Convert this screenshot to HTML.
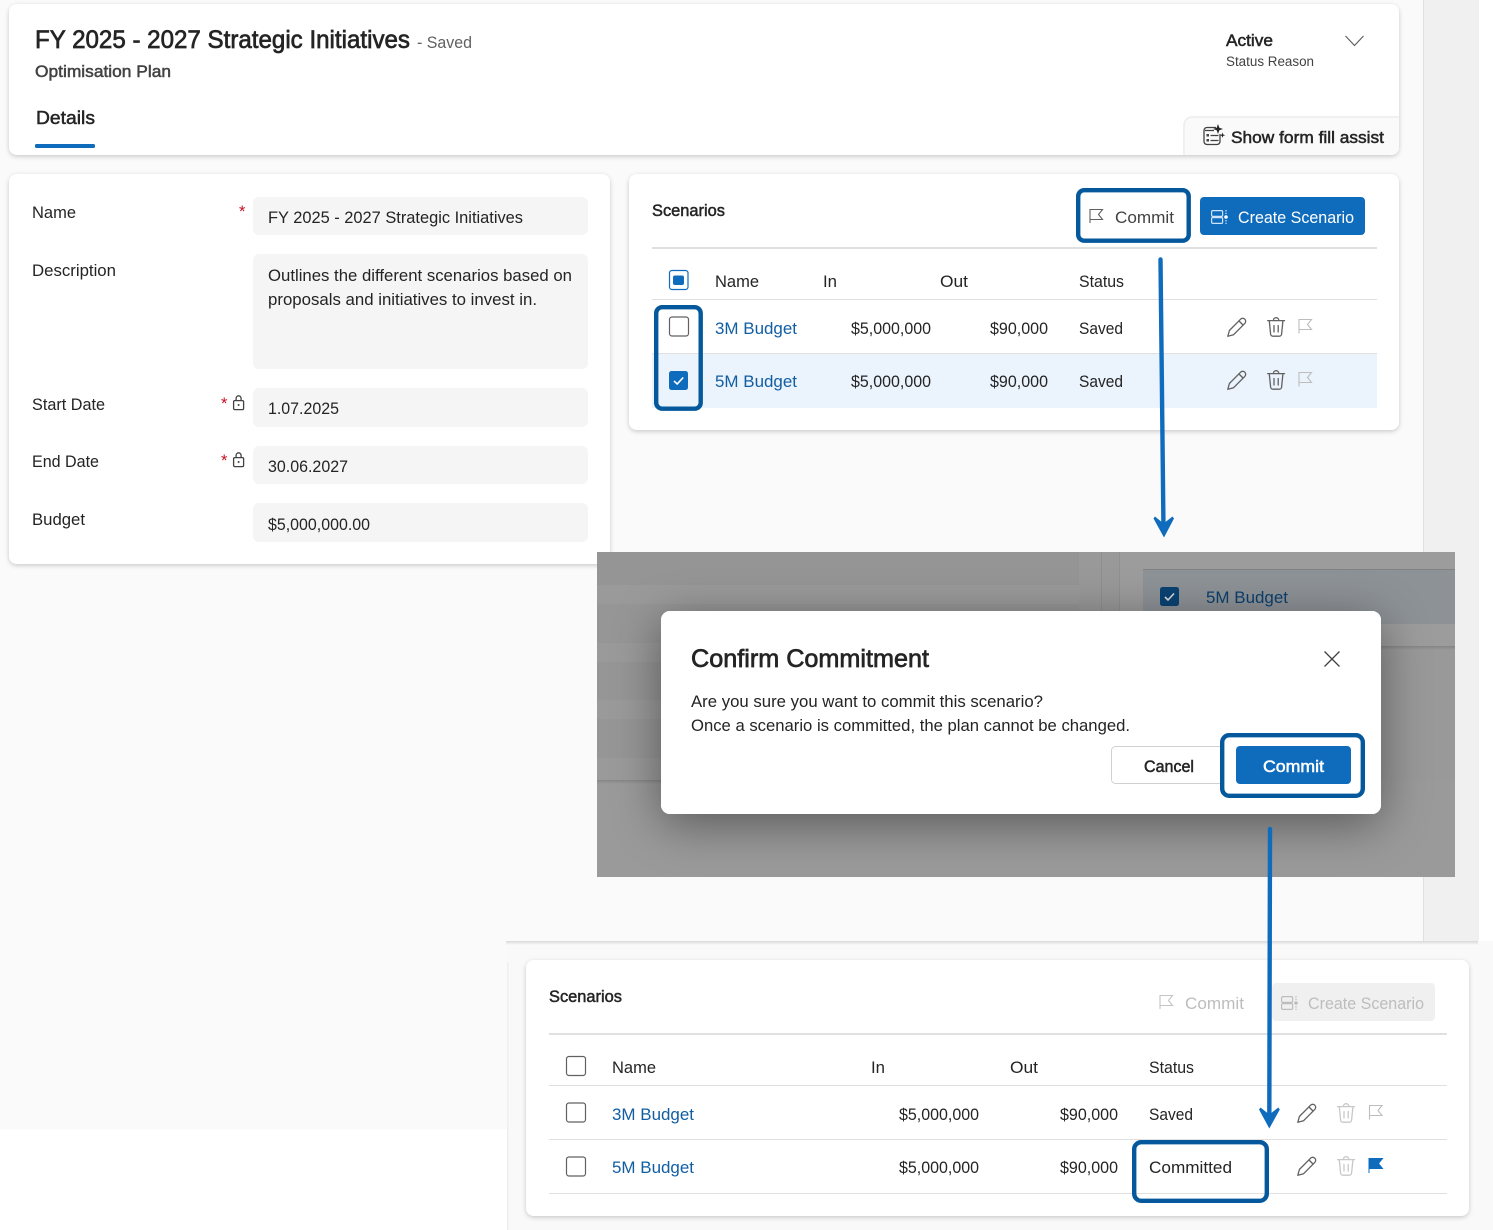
<!DOCTYPE html>
<html lang="en">
<head>
<meta charset="utf-8">
<title>Confirm Commitment</title>
<style>
html,body{margin:0;padding:0;background:#fff;width:1493px;height:1230px;overflow:hidden}
svg{display:block;position:absolute;left:0;top:0}
text{font-family:"Liberation Sans",sans-serif;font-size:16.5px;fill:#242424;white-space:pre}
.sb{stroke:#242424;stroke-width:.5px}
.lnk{fill:#115ea3}
.dis{fill:#bdbdbd}
</style>
</head>
<body>
<svg width="1493" height="1230" viewBox="0 0 1493 1230" xmlns="http://www.w3.org/2000/svg">
<defs>
<filter id="sh" x="-5%" y="-10%" width="110%" height="125%"><feDropShadow dx="0" dy="1.5" stdDeviation="2.5" flood-color="#000" flood-opacity=".2"/></filter>
<filter id="msh" x="-25%" y="-60%" width="150%" height="240%"><feDropShadow dx="0" dy="10" stdDeviation="24" flood-color="#000" flood-opacity=".42"/></filter>
<linearGradient id="edge" x1="0" y1="0" x2="0" y2="1"><stop offset="0" stop-color="#000" stop-opacity=".13"/><stop offset="1" stop-color="#000" stop-opacity="0"/></linearGradient>
<clipPath id="ov"><rect x="597" y="552" width="858" height="325"/></clipPath>
<g id="pencil" fill="none" stroke="#616161" stroke-width="1.3" stroke-linejoin="round"><path d="M.8 19.3l1.6-5.8L13.6 2.2a2.5 2.5 0 0 1 4.2 4.2L6.6 17.7z"/><path d="M12 4l4 4"/></g>
<g id="trash" fill="none" stroke="#616161" stroke-width="1.3" stroke-linecap="round" stroke-linejoin="round"><path d="M.7 3.6h16.8"/><path d="M6.4 3.4a2.7 2.7 0 0 1 5.4 0"/><path d="M2.3 4l1.3 13a2.3 2.3 0 0 0 2.3 2.2h6.4a2.3 2.3 0 0 0 2.3-2.2L15.9 4"/><path d="M7 8.500v6.500M11.200 8.500v6.500"/></g>
<g id="trashd" fill="none" stroke="#c8c8c8" stroke-width="1.3" stroke-linecap="round" stroke-linejoin="round"><path d="M.7 3.6h16.8"/><path d="M6.4 3.4a2.7 2.7 0 0 1 5.4 0"/><path d="M2.3 4l1.3 13a2.3 2.3 0 0 0 2.3 2.2h6.4a2.3 2.3 0 0 0 2.3-2.2L15.900 4"/><path d="M7 8.500v6.500M11.200 8.500v6.500"/></g>
<path id="flag" d="M.5 14.500V.5H13L9 5.500l4 5H.5" fill="none" stroke="#bdbdbd" stroke-width="1.100"/>
<g id="lock" fill="none" stroke="#424242" stroke-width="1.300"><rect x="1.100" y="5.600" width="10" height="9" rx="1.200"/><path d="M3.600 5.500V3.300a2.500 2.500 0 0 1 5 0v2.200"/><circle cx="6.100" cy="10" r="1" fill="#424242" stroke="none"/></g>
<g id="create" fill="none" stroke-width="1.200"><rect x=".6" y=".6" width="11" height="5.800" rx="1.100"/><rect x=".6" y="7.600" width="11" height="5.800" rx="1.100"/><path d="M15 0v4M15 10v4" stroke-dasharray="1.500 1.200"/></g>
<rect id="cb" width="19" height="19" rx="2.500" fill="#fff" stroke="#616161" stroke-width="1.200"/>
</defs>

<!-- page background -->
<rect width="1493" height="1230" fill="#fff"/>
<rect x="0" y="0" width="1424" height="941" fill="#fafafa"/>
<rect x="1423" y="0" width="1" height="941" fill="#e0e0e0"/>
<rect x="1424" y="0" width="55" height="941" fill="#f0f0f0"/>
<rect x="0" y="941" width="507" height="188" fill="#fafafa"/>
<rect x="507" y="941" width="986" height="289" fill="#f9f9f9"/>
<rect x="506" y="941" width="972" height="4" fill="url(#edge)"/>
<rect x="507" y="962" width="1.500" height="268" fill="#efefef"/>

<!-- header card -->
<rect x="9" y="4" width="1390" height="151" rx="8" fill="#fff" filter="url(#sh)"/>
<text x="35" y="48" style="font-size:25px;stroke-width:.7px" class="sb" textLength="375" lengthAdjust="spacingAndGlyphs">FY 2025 - 2027 Strategic Initiatives</text>
<text x="417" y="48" style="fill:#616161" textLength="55" lengthAdjust="spacingAndGlyphs">- Saved</text>
<text x="35" y="77" class="sb" style="fill:#424242;stroke:#424242" textLength="136" lengthAdjust="spacingAndGlyphs">Optimisation Plan</text>
<text x="36" y="124" class="sb" style="font-size:18.500px" textLength="59" lengthAdjust="spacingAndGlyphs">Details</text>
<rect x="35" y="144" width="60" height="4" rx="1.500" fill="#0f6cbd"/>
<text x="1226" y="46" class="sb" textLength="47" lengthAdjust="spacingAndGlyphs">Active</text>
<text x="1226" y="66" style="font-size:13.500px;fill:#424242" textLength="88" lengthAdjust="spacingAndGlyphs">Status Reason</text>
<path d="M1345.500 36l9 9.500 9-9.500" fill="none" stroke="#616161" stroke-width="1.200"/>
<path d="M1184 155v-30a8 8 0 0 1 8-8h207v30a8 8 0 0 1-8 8z" fill="#fafafa"/>
<path d="M1184 155v-30a8 8 0 0 1 8-8h207" fill="none" stroke="#ececec" stroke-width="1.500"/>
<g fill="none" stroke="#424242" stroke-width="1.300"><path d="M1216 127.500h-9a3 3 0 0 0-3 3v11a3 3 0 0 0 3 3h10a3 3 0 0 0 3-3V134"/><path d="M1205 130.500h9M1210.500 135.500h8M1210.500 140.500h8"/></g>
<rect x="1206.500" y="134" width="2.500" height="2.500" fill="#424242"/><rect x="1206.500" y="139" width="2.500" height="2.500" fill="#424242"/>
<path d="M1218 124l1.300 3.700 3.700 1.300-3.700 1.300-1.300 3.700-1.300-3.700-3.700-1.300 3.700-1.300z" fill="#242424"/>
<path d="M1222.500 132.500l.7 2 2 .7-2 .7-.7 2-.7-2-2-.7 2-.7z" fill="#242424"/>
<text x="1231" y="143" class="sb" textLength="153" lengthAdjust="spacingAndGlyphs">Show form fill assist</text>

<!-- left form card -->
<rect x="9" y="174" width="601" height="390" rx="8" fill="#fff" filter="url(#sh)"/>
<text x="32" y="218" textLength="44" lengthAdjust="spacingAndGlyphs">Name</text>
<text x="32" y="276" textLength="84" lengthAdjust="spacingAndGlyphs">Description</text>
<text x="32" y="410" textLength="73" lengthAdjust="spacingAndGlyphs">Start Date</text>
<text x="32" y="467" textLength="67" lengthAdjust="spacingAndGlyphs">End Date</text>
<text x="32" y="525" textLength="53" lengthAdjust="spacingAndGlyphs">Budget</text>
<text x="239" y="217" style="fill:#c50f1f">*</text>
<text x="221" y="409" style="fill:#c50f1f">*</text>
<text x="221" y="466" style="fill:#c50f1f">*</text>
<use href="#lock" x="232.500" y="395"/>
<use href="#lock" x="232.500" y="452"/>
<rect x="253" y="197" width="335" height="38" rx="6" fill="#f5f5f5"/>
<rect x="253" y="254" width="335" height="115" rx="6" fill="#f5f5f5"/>
<rect x="253" y="388" width="335" height="39" rx="6" fill="#f5f5f5"/>
<rect x="253" y="446" width="335" height="38" rx="6" fill="#f5f5f5"/>
<rect x="253" y="503" width="335" height="39" rx="6" fill="#f5f5f5"/>
<text x="268" y="223" textLength="255" lengthAdjust="spacingAndGlyphs">FY 2025 - 2027 Strategic Initiatives</text>
<text x="268" y="281" textLength="304" lengthAdjust="spacingAndGlyphs">Outlines the different scenarios based on</text>
<text x="268" y="305" textLength="269" lengthAdjust="spacingAndGlyphs">proposals and initiatives to invest in.</text>
<text x="268" y="414" textLength="71" lengthAdjust="spacingAndGlyphs">1.07.2025</text>
<text x="268" y="472" textLength="80" lengthAdjust="spacingAndGlyphs">30.06.2027</text>
<text x="268" y="530" textLength="102" lengthAdjust="spacingAndGlyphs">$5,000,000.00</text>

<!-- top scenarios card -->
<rect x="629" y="174" width="770" height="256" rx="8" fill="#fff" filter="url(#sh)"/>
<text x="652" y="216" class="sb" textLength="73" lengthAdjust="spacingAndGlyphs">Scenarios</text>
<path d="M1090 223V209.500h12.500l-4 5 4 5H1090" fill="none" stroke="#616161" stroke-width="1.100"/>
<text x="1115" y="223" style="fill:#424242" textLength="59" lengthAdjust="spacingAndGlyphs">Commit</text>
<rect x="1200" y="197" width="165" height="38" rx="4" fill="#0f6cbd"/>
<use href="#create" x="1211" y="210" stroke="#cfe4fa"/>
<circle cx="1226" cy="217" r="1.800" fill="#fff"/>
<text x="1238" y="223" style="fill:#fff" textLength="116" lengthAdjust="spacingAndGlyphs">Create Scenario</text>
<rect x="652" y="247" width="725" height="2" fill="#e0e0e0"/>
<rect x="669.500" y="270.500" width="18.500" height="19" rx="2.500" fill="#fff" stroke="#0f6cbd" stroke-width="1.200"/>
<rect x="673" y="275.500" width="11" height="9.500" rx="2" fill="#0f6cbd"/>
<text x="715" y="287" textLength="44" lengthAdjust="spacingAndGlyphs">Name</text>
<text x="823" y="287" textLength="14" lengthAdjust="spacingAndGlyphs">In</text>
<text x="940" y="287" textLength="28" lengthAdjust="spacingAndGlyphs">Out</text>
<text x="1079" y="287" textLength="45" lengthAdjust="spacingAndGlyphs">Status</text>
<rect x="652" y="299" width="725" height="1" fill="#e0e0e0"/>
<rect x="652" y="353" width="725" height="1" fill="#e0e0e0"/>
<rect x="652" y="354" width="725" height="54" fill="#ebf3fc"/>
<use href="#cb" x="669.500" y="317"/>
<rect x="669" y="371" width="19" height="19" rx="2.500" fill="#0f6cbd"/>
<path d="M674 381l3.200 3 6-6.500" fill="none" stroke="#fff" stroke-width="1.600"/>
<text x="715" y="334" class="lnk" textLength="82" lengthAdjust="spacingAndGlyphs">3M Budget</text>
<text x="851" y="334" textLength="80" lengthAdjust="spacingAndGlyphs">$5,000,000</text>
<text x="990" y="334" textLength="58" lengthAdjust="spacingAndGlyphs">$90,000</text>
<text x="1079" y="334" textLength="44" lengthAdjust="spacingAndGlyphs">Saved</text>
<text x="715" y="387" class="lnk" textLength="82" lengthAdjust="spacingAndGlyphs">5M Budget</text>
<text x="851" y="387" textLength="80" lengthAdjust="spacingAndGlyphs">$5,000,000</text>
<text x="990" y="387" textLength="58" lengthAdjust="spacingAndGlyphs">$90,000</text>
<text x="1079" y="387" textLength="44" lengthAdjust="spacingAndGlyphs">Saved</text>
<use href="#pencil" x="1227" y="317"/><use href="#trash" x="1267" y="317"/><use href="#flag" x="1298.500" y="319"/>
<use href="#pencil" x="1227" y="370"/><use href="#trash" x="1267" y="370"/><use href="#flag" x="1298.500" y="372"/>

<!-- callouts on top card -->
<rect x="1078.200" y="190.200" width="110.500" height="50.500" rx="6" fill="none" stroke="#05589c" stroke-width="4.400"/>
<rect x="656.200" y="307.200" width="44.500" height="101.500" rx="6" fill="none" stroke="#05589c" stroke-width="4.400"/>

<!-- dimmed modal screenshot -->
<g clip-path="url(#ov)">
<rect x="597" y="552" width="858" height="325" fill="#999"/>
<rect x="597" y="552" width="482" height="33" fill="#959595"/>
<rect x="597" y="585" width="482" height="19" fill="#9a9a9a"/>
<rect x="597" y="604" width="482" height="39" fill="#969696"/>
<rect x="597" y="643" width="482" height="19" fill="#9a9a9a"/>
<rect x="597" y="662" width="482" height="38" fill="#969696"/>
<rect x="597" y="700" width="482" height="19" fill="#9a9a9a"/>
<rect x="597" y="719" width="482" height="39" fill="#969696"/>
<rect x="597" y="758" width="482" height="22" fill="#9a9a9a"/>
<rect x="597" y="780" width="858" height="97" fill="#9a9a9a"/>
<rect x="597" y="780" width="500" height="4" fill="url(#edge)"/>
<rect x="1101" y="552" width="1" height="228" fill="#8f8f8f"/>
<rect x="1119" y="552" width="1" height="228" fill="#8f8f8f"/>
<rect x="1120" y="552" width="335" height="94" fill="#9c9c9c"/>
<rect x="1143" y="569" width="312" height="55" fill="#8d9296"/>
<rect x="1143" y="569" width="312" height="1" fill="#828282"/>
<rect x="1120" y="646" width="335" height="4" fill="url(#edge)"/>
<rect x="1160" y="587" width="19" height="19" rx="2.500" fill="#0a4273"/>
<path d="M1165 597l3 3 6-6.500" fill="none" stroke="#dcdcdc" stroke-width="1.600"/>
<text x="1206" y="603" style="fill:#0c3f6d" textLength="82" lengthAdjust="spacingAndGlyphs">5M Budget</text>
<rect x="661" y="611" width="720" height="203" rx="9" fill="#fff" filter="url(#msh)"/>
</g>
<rect x="661" y="611" width="720" height="203" rx="9" fill="#fff"/>
<text x="691" y="667" class="sb" style="font-size:25px;stroke-width:.7px" textLength="238" lengthAdjust="spacingAndGlyphs">Confirm Commitment</text>
<path d="M1324.500 651.500l15 15M1339.500 651.500l-15 15" stroke="#424242" stroke-width="1.300" fill="none"/>
<text x="691" y="707" textLength="352" lengthAdjust="spacingAndGlyphs">Are you sure you want to commit this scenario?</text>
<text x="691" y="731" textLength="439" lengthAdjust="spacingAndGlyphs">Once a scenario is committed, the plan cannot be changed.</text>
<rect x="1111.500" y="746.500" width="125" height="37" rx="4" fill="#fff" stroke="#d1d1d1"/>
<text x="1144" y="772" class="sb" textLength="50" lengthAdjust="spacingAndGlyphs">Cancel</text>
<rect x="1222.200" y="735.200" width="140.600" height="60.600" rx="7" fill="#fff" stroke="#05589c" stroke-width="4.400"/>
<rect x="1236" y="746" width="115" height="38" rx="4" fill="#0f6cbd"/>
<text x="1263" y="772" class="sb" style="fill:#fff;stroke:#fff" textLength="61" lengthAdjust="spacingAndGlyphs">Commit</text>

<!-- bottom scenarios card -->
<rect x="526" y="960" width="943" height="256" rx="8" fill="#fff" filter="url(#sh)"/>
<text x="549" y="1002" class="sb" textLength="73" lengthAdjust="spacingAndGlyphs">Scenarios</text>
<path d="M1160 1009V995.500h12.500l-4 5 4 5H1160" fill="none" stroke="#c4c4c4" stroke-width="1.100"/>
<text x="1185" y="1009" class="dis" textLength="59" lengthAdjust="spacingAndGlyphs">Commit</text>
<rect x="1272" y="983" width="163" height="38" rx="4" fill="#f0f0f0"/>
<use href="#create" x="1281" y="996" stroke="#bdbdbd"/>
<circle cx="1296" cy="1003" r="1.800" fill="#bdbdbd"/>
<text x="1308" y="1009" class="dis" textLength="116" lengthAdjust="spacingAndGlyphs">Create Scenario</text>
<rect x="549" y="1033" width="898" height="2" fill="#e0e0e0"/>
<use href="#cb" x="566.500" y="1056.500"/>
<text x="612" y="1073" textLength="44" lengthAdjust="spacingAndGlyphs">Name</text>
<text x="871" y="1073" textLength="14" lengthAdjust="spacingAndGlyphs">In</text>
<text x="1010" y="1073" textLength="28" lengthAdjust="spacingAndGlyphs">Out</text>
<text x="1149" y="1073" textLength="45" lengthAdjust="spacingAndGlyphs">Status</text>
<rect x="549" y="1085" width="898" height="1" fill="#e0e0e0"/>
<rect x="549" y="1139" width="898" height="1" fill="#e0e0e0"/>
<rect x="549" y="1193" width="898" height="1" fill="#e0e0e0"/>
<use href="#cb" x="566.500" y="1103"/>
<use href="#cb" x="566.500" y="1157"/>
<text x="612" y="1120" class="lnk" textLength="82" lengthAdjust="spacingAndGlyphs">3M Budget</text>
<text x="899" y="1120" textLength="80" lengthAdjust="spacingAndGlyphs">$5,000,000</text>
<text x="1060" y="1120" textLength="58" lengthAdjust="spacingAndGlyphs">$90,000</text>
<text x="1149" y="1120" textLength="44" lengthAdjust="spacingAndGlyphs">Saved</text>
<text x="612" y="1173" class="lnk" textLength="82" lengthAdjust="spacingAndGlyphs">5M Budget</text>
<text x="899" y="1173" textLength="80" lengthAdjust="spacingAndGlyphs">$5,000,000</text>
<text x="1060" y="1173" textLength="58" lengthAdjust="spacingAndGlyphs">$90,000</text>
<text x="1149" y="1173" textLength="83" lengthAdjust="spacingAndGlyphs">Committed</text>
<use href="#pencil" x="1297" y="1103"/><use href="#trashd" x="1337" y="1103"/><use href="#flag" x="1369" y="1105"/>
<use href="#pencil" x="1297" y="1156"/><use href="#trashd" x="1337" y="1156"/>
<path d="M1369 1173v-14.500h13.500l-4 5 4 5h-13.500" fill="#0f6cbd" stroke="#0f6cbd" stroke-width="1"/>
<rect x="1134.200" y="1142.200" width="132.600" height="58.600" rx="7" fill="none" stroke="#05589c" stroke-width="4.400"/>

<!-- arrows -->
<g fill="none" stroke="#0f6cbd" stroke-width="4.400" stroke-linecap="round">
<path d="M1160.500 259.500L1163.500 530"/>
<path d="M1270 829L1269.300 1120"/>
</g>
<path d="M1155 516.500l8.500 7 9-7 1.500 2-10 19-10.500-19z" fill="#0f6cbd"/>
<path d="M1260.500 1107.500l8.800 7 9-7 1.500 2-10.500 19-10.300-19z" fill="#0f6cbd"/>
</svg>
</body>
</html>
